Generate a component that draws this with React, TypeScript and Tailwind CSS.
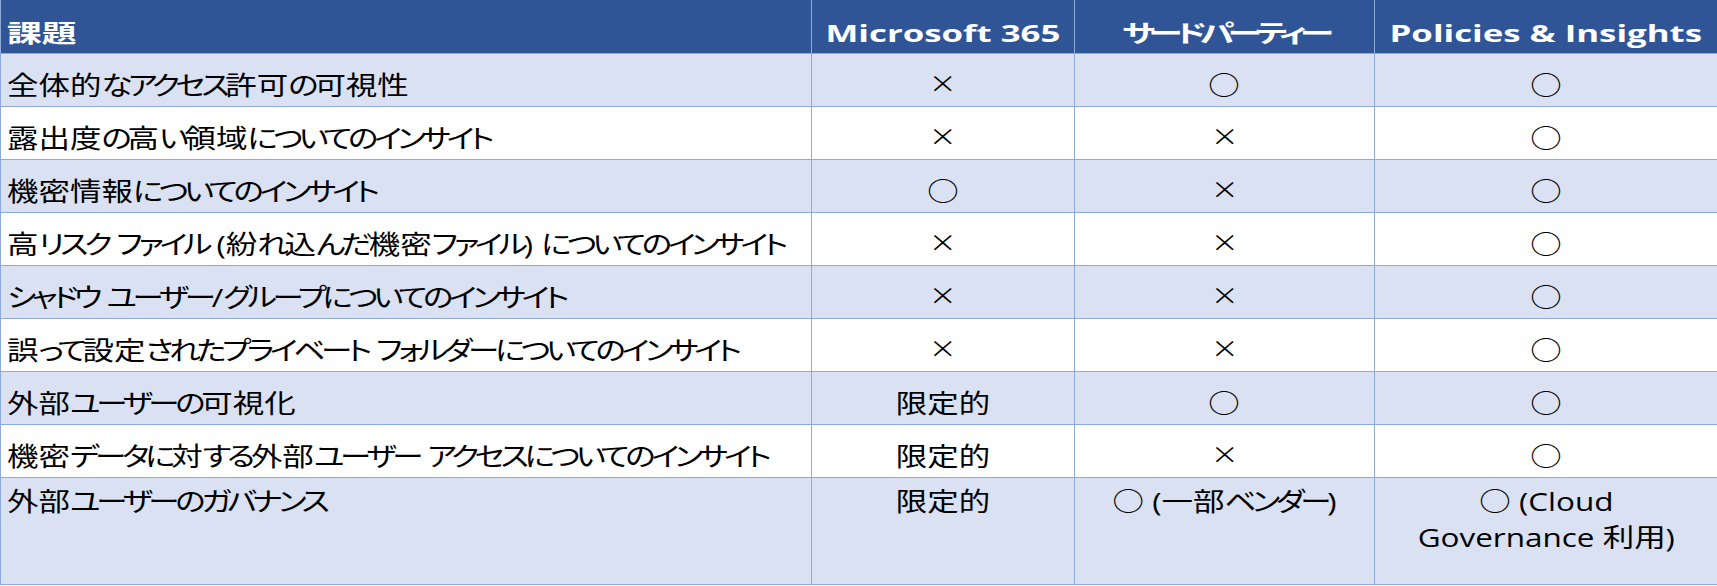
import React from "react";

type Row = {
  topic: string;
  m365: string;
  third: string;
  pi: string[];
  tall?: boolean;
};

const rows: Row[] = [
  { topic: "全体的なアクセス許可の可視性", m365: "×", third: "○", pi: ["○"] },
  { topic: "露出度の高い領域についてのインサイト", m365: "×", third: "×", pi: ["○"] },
  { topic: "機密情報についてのインサイト", m365: "○", third: "×", pi: ["○"] },
  { topic: "高リスク ファイル (紛れ込んだ機密ファイル) についてのインサイト", m365: "×", third: "×", pi: ["○"] },
  { topic: "シャドウ ユーザー/グループについてのインサイト", m365: "×", third: "×", pi: ["○"] },
  { topic: "誤って設定されたプライベート フォルダーについてのインサイト", m365: "×", third: "×", pi: ["○"] },
  { topic: "外部ユーザーの可視化", m365: "限定的", third: "○", pi: ["○"] },
  { topic: "機密データに対する外部ユーザー アクセスについてのインサイト", m365: "限定的", third: "×", pi: ["○"] },
  { topic: "外部ユーザーのガバナンス", m365: "限定的", third: "○ (一部ベンダー)", pi: ["○ (Cloud", "Governance 利用)"], tall: true },
];

// kana in the source font are narrower than kanji, so tighten them
function Jp({ text, kana }: { text: string; kana: string }) {
  const parts = text.split(/([\u3040-\u30ff]+)/);
  return (
    <>
      {parts.map((p, i) =>
        /[\u3040-\u30ff]/.test(p) ? (
          <span key={i} className={kana}>
            {p}
          </span>
        ) : p === "×" ? (
          <span key={i} className="text-[34px] font-light leading-none">
            ×
          </span>
        ) : (
          <React.Fragment key={i}>{p}</React.Fragment>
        )
      )}
    </>
  );
}

function Wide({ text, left, head }: { text: string; left?: boolean; head?: boolean }) {
  return (
    <span
      className={`inline-block whitespace-nowrap ${head ? "scale-x-[1.45]" : "scale-x-[1.21]"} ${
        left ? "origin-left" : "origin-center"
      }`}
    >
      <Jp text={text} kana={head ? "tracking-[-4.5px]" : "tracking-[-3.5px]"} />
    </span>
  );
}

export default function App() {
  const cellBase = "border-r border-b border-[#8ea9db] flex";
  const head = `${cellBase} bg-[#2f5597] items-center pt-[13px] text-white font-bold text-[24px] leading-[32px]`;

  return (
    <div className="w-[1717px] h-[586px] bg-white font-['Open_Sans','Noto_Sans_CJK_JP',sans-serif] [font-feature-settings:'palt'] text-black">
      <div className="grid grid-cols-[811px_263px_300px_343px] grid-rows-[54px_repeat(8,53px)_107px] border-l border-[#8ea9db]">
        <div className={`${head} pl-[6px]`}>
          <Wide text="課題" left head />
        </div>
        <div className={`${head} justify-center`}>
          <Wide text="Microsoft 365" head />
        </div>
        <div className={`${head} justify-center`}>
          <Wide text="サードパーティー" head />
        </div>
        <div className={`${head} justify-center`}>
          <Wide text="Policies & Insights" head />
        </div>

        {rows.map((r, i) => {
          const bg = i % 2 === 0 ? "bg-[#d9e1f2]" : "bg-white";
          const align = r.tall ? "items-start pt-[5px]" : "items-center pt-[10px]";
          const cell = `${cellBase} ${bg} ${align} text-[26px] leading-[36px]`;
          return (
            <React.Fragment key={i}>
              <div className={`${cell} pl-[6px]`}>
                <Wide text={r.topic} left />
              </div>
              <div className={`${cell} justify-center`}>
                <Wide text={r.m365} />
              </div>
              <div className={`${cell} justify-center`}>
                <Wide text={r.third} />
              </div>
              <div className={`${cell} justify-center`}>
                <div className="flex flex-col items-center">
                  {r.pi.map((line) => (
                    <Wide key={line} text={line} />
                  ))}
                </div>
              </div>
            </React.Fragment>
          );
        })}
      </div>
    </div>
  );
}
